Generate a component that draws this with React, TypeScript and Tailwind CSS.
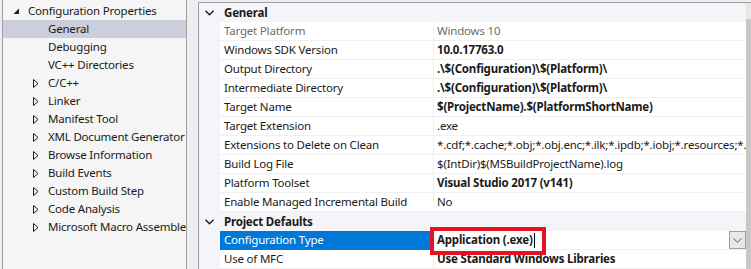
import React from "react";

// ── Tree (left panel) ──────────────────────────────────

const treeItems: { label: string; level: 0 | 1; arrow?: "open" | "closed"; selected?: boolean }[] = [
  { label: "Configuration Properties", level: 0, arrow: "open" },
  { label: "General", level: 1, selected: true },
  { label: "Debugging", level: 1 },
  { label: "VC++ Directories", level: 1 },
  { label: "C/C++", level: 1, arrow: "closed" },
  { label: "Linker", level: 1, arrow: "closed" },
  { label: "Manifest Tool", level: 1, arrow: "closed" },
  { label: "XML Document Generator", level: 1, arrow: "closed" },
  { label: "Browse Information", level: 1, arrow: "closed" },
  { label: "Build Events", level: 1, arrow: "closed" },
  { label: "Custom Build Step", level: 1, arrow: "closed" },
  { label: "Code Analysis", level: 1, arrow: "closed" },
  { label: "Microsoft Macro Assembler", level: 1, arrow: "closed" },
];

function OpenArrow() {
  return (
    <svg width="7" height="7" viewBox="0 0 7 7" className="shrink-0">
      <polygon points="6,0.5 6,6 0.5,6" fill="#1e1e1e" />
    </svg>
  );
}

function ClosedArrow() {
  return (
    <svg width="6" height="9" viewBox="0 0 6 9" className="shrink-0">
      <polygon points="0.5,0.5 5,4.5 0.5,8.5" fill="none" stroke="#1e1e1e" strokeWidth="1" />
    </svg>
  );
}

function TreeRow({ item }: { item: (typeof treeItems)[number] }) {
  return (
    <div
      className={`flex h-[18px] items-center whitespace-nowrap ${item.selected ? "bg-[#cccedb]" : ""} ${
        item.level === 0 ? "pl-[10px]" : "pl-[30px]"
      }`}
    >
      <div className="flex w-[14px] shrink-0 items-center">
        {item.arrow === "open" && <OpenArrow />}
        {item.arrow === "closed" && <ClosedArrow />}
      </div>
      <span className={item.level === 0 ? "ml-[1px]" : "ml-[1px]"}>{item.label}</span>
    </div>
  );
}

// ── Property grid (right panel) ────────────────────────

type Prop = { name: string; value: string; bold?: boolean; muted?: boolean; selected?: boolean };

const general: Prop[] = [
  { name: "Target Platform", value: "Windows 10", muted: true },
  { name: "Windows SDK Version", value: "10.0.17763.0", bold: true },
  { name: "Output Directory", value: ".\\$(Configuration)\\$(Platform)\\", bold: true },
  { name: "Intermediate Directory", value: ".\\$(Configuration)\\$(Platform)\\", bold: true },
  { name: "Target Name", value: "$(ProjectName).$(PlatformShortName)", bold: true },
  { name: "Target Extension", value: ".exe" },
  {
    name: "Extensions to Delete on Clean",
    value: "*.cdf;*.cache;*.obj;*.obj.enc;*.ilk;*.ipdb;*.iobj;*.resources;*.tlb;*.tli;*.tlh",
  },
  { name: "Build Log File", value: "$(IntDir)$(MSBuildProjectName).log" },
  { name: "Platform Toolset", value: "Visual Studio 2017 (v141)", bold: true },
  { name: "Enable Managed Incremental Build", value: "No" },
];

const defaults: Prop[] = [
  { name: "Configuration Type", value: "Application (.exe)", bold: true, selected: true },
  { name: "Use of MFC", value: "Use Standard Windows Libraries", bold: true },
];

function Chevron() {
  return (
    <svg width="9" height="6" viewBox="0 0 9 6" className="shrink-0">
      <polyline points="0.5,0.8 4.5,4.8 8.5,0.8" fill="none" stroke="#1e1e1e" strokeWidth="1.4" />
    </svg>
  );
}

function Category({ title }: { title: string }) {
  return (
    <div className="flex h-[19px] items-center bg-[#f3f5f9] pl-[6px] font-bold">
      <Chevron />
      <span className="ml-[10px]">{title}</span>
    </div>
  );
}

function PropRow({ p }: { p: Prop }) {
  return (
    <div className="flex h-[19px] bg-[#f3f5f9]">
      <div className="w-[21px] shrink-0" />
      <div
        className={`flex w-[214px] shrink-0 items-center border-b border-r border-[#f0f0f0] pl-[4px] whitespace-nowrap ${
          p.selected ? "border-b-[#0078d7] bg-[#0078d7] text-white" : "bg-white"
        } ${p.muted ? "text-[#6d6d6d]" : ""}`}
      >
        {p.name}
      </div>
      <div
        className={`relative flex min-w-0 flex-1 items-center overflow-hidden border-b border-[#f0f0f0] bg-white pl-[3px] whitespace-nowrap ${
          p.bold ? "font-bold" : ""
        } ${p.muted ? "text-[#6d6d6d]" : ""}`}
      >
        {p.value}
        {p.selected && (
          <>
            <span className="ml-[1px] inline-block h-[15px] w-[1px] bg-black" />
            <div className="ml-auto flex h-[18px] w-[17px] items-center justify-center border border-[#a0a0a0] bg-[#e8e8e8]">
              <svg width="9" height="5" viewBox="0 0 9 5">
                <polyline points="0.5,0.5 4.5,4.3 8.5,0.5" fill="none" stroke="#555" strokeWidth="1" />
              </svg>
            </div>
          </>
        )}
      </div>
    </div>
  );
}

export default function App() {
  return (
    <div
      className="flex h-[269px] w-[751px] overflow-hidden bg-[#eeeef2] text-[11.5px] tracking-[-0.2px] text-[#1a1a1a]"
      style={{ fontFamily: '"Noto Sans", "Open Sans", sans-serif' }}
    >
      {/* tree */}
      <div className="ml-[2px] h-full w-[185px] shrink-0 overflow-hidden border-x border-[#a0a0a0] bg-[#f5f5f5] pt-[2px]">
        {treeItems.map((item) => (
          <TreeRow key={item.label} item={item} />
        ))}
      </div>

      {/* property grid */}
      <div className="relative ml-[11px] mt-[2px] flex min-w-0 flex-1 border-l border-t border-[#a0a0a0] bg-[#f3f5f9]">
        <div className="min-w-0 flex-1 overflow-hidden">
          <Category title="General" />
          {general.map((p) => (
            <PropRow key={p.name} p={p} />
          ))}
          <Category title="Project Defaults" />
          {defaults.map((p) => (
            <PropRow key={p.name} p={p} />
          ))}
        </div>
        <div className="flex w-[5px] shrink-0 flex-col">
          <div className="h-[16px] bg-[#e8e8e8]" />
          <div className="flex-1 bg-[#c8c8c8]" />
        </div>

        {/* highlight box around the edited value */}
        <div className="absolute left-[231px] top-[224px] h-[28px] w-[116px] border-[4px] border-[#e81123]" />
      </div>
    </div>
  );
}
